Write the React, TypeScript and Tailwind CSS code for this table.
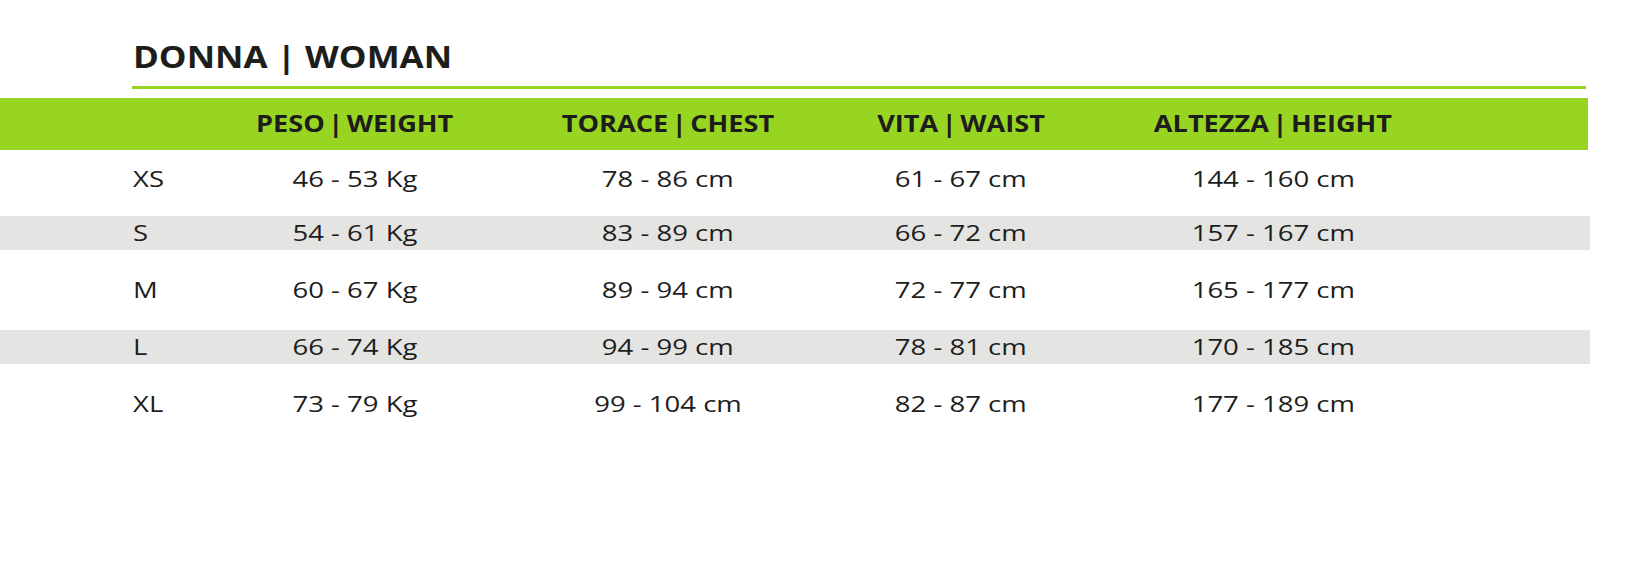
const rows = [
  { size: 'XS', weight: '46 - 53 Kg', chest: '78 - 86 cm', waist: '61 - 67 cm', height: '144 - 160 cm', nudge: 'pt-[3px]' },
  { size: 'S', weight: '54 - 61 Kg', chest: '83 - 89 cm', waist: '66 - 72 cm', height: '157 - 167 cm', nudge: 'pb-[1px]' },
  { size: 'M', weight: '60 - 67 Kg', chest: '89 - 94 cm', waist: '72 - 77 cm', height: '165 - 177 cm', nudge: 'pb-[2px]' },
  { size: 'L', weight: '66 - 74 Kg', chest: '94 - 99 cm', waist: '78 - 81 cm', height: '170 - 185 cm', nudge: 'pb-[8px]' },
  { size: 'XL', weight: '73 - 79 Kg', chest: '99 - 104 cm', waist: '82 - 87 cm', height: '177 - 189 cm', nudge: 'pb-[14px]' },
];

// the original artwork is stretched wide, so text is scaled horizontally
const cols = 'grid grid-cols-[240px_230px_396px_190px_434px_1fr] items-center';
const cell = 'text-center whitespace-nowrap';

function Wide({ children, s }: { children: React.ReactNode; s: 'head' | 'cell' }) {
  return (
    <span className={`inline-block ${s === 'head' ? 'scale-x-[1.18] [word-spacing:-3px]' : 'scale-x-[1.25]'}`}>{children}</span>
  );
}

export default function App() {
  return (
    <div className="w-[1632px] h-[563px] bg-white text-[#1d1d1b] font-['Open_Sans',sans-serif] overflow-hidden">
      <div className="pt-[39px] pl-[133px]">
        <h1 className="text-[30px] leading-[36px] font-bold">
          <span className="inline-block origin-left scale-x-[1.165]">DONNA | WOMAN</span>
        </h1>
      </div>
      <div className="mt-[11px] ml-[132px] w-[1454px] h-[3px] bg-[#98d523]" />

      <div className="mt-[9px] w-[1588px]">
        <div className={`${cols} h-[52px] pb-[2px] bg-[#98d523] text-[23px] font-bold`}>
          <div />
          <div className={cell}><Wide s="head">PESO | WEIGHT</Wide></div>
          <div className={cell}><Wide s="head">TORACE | CHEST</Wide></div>
          <div className={cell}><Wide s="head">VITA | WAIST</Wide></div>
          <div className={cell}><Wide s="head">ALTEZZA | HEIGHT</Wide></div>
          <div />
        </div>

        <div className="mt-[9px] flex flex-col gap-[23px] w-[1590px]">
          {rows.map((r, i) => (
            <div key={r.size} className={`${cols} h-[34px] ${r.nudge} text-[22px] ${i % 2 === 1 ? 'bg-[#e4e4e3]' : ''}`}>
              <div className="pl-[133px]">
                <span className="inline-block origin-left scale-x-[1.25]">{r.size}</span>
              </div>
              <div className={cell}><Wide s="cell">{r.weight}</Wide></div>
              <div className={cell}><Wide s="cell">{r.chest}</Wide></div>
              <div className={cell}><Wide s="cell">{r.waist}</Wide></div>
              <div className={cell}><Wide s="cell">{r.height}</Wide></div>
              <div />
            </div>
          ))}
        </div>
      </div>
    </div>
  );
}
